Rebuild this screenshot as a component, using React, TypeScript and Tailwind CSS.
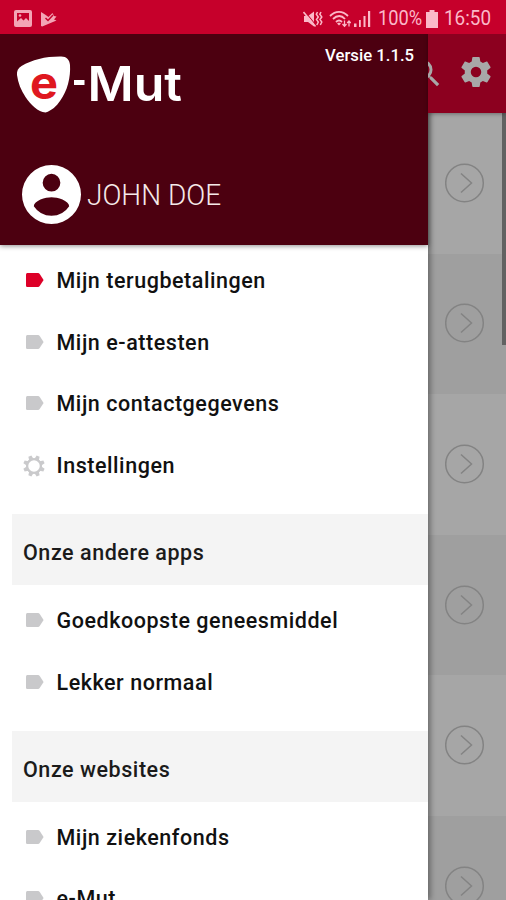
type MenuItem = {
  label: string;
  icon?: "tag" | "gear";
  active?: boolean;
};

type MenuSection = {
  title?: string;
  items: MenuItem[];
};

const sections: MenuSection[] = [
  {
    items: [
      { label: "Mijn terugbetalingen", active: true },
      { label: "Mijn e-attesten" },
      { label: "Mijn contactgegevens" },
      { label: "Instellingen", icon: "gear" },
    ],
  },
  {
    title: "Onze andere apps",
    items: [{ label: "Goedkoopste geneesmiddel" }, { label: "Lekker normaal" }],
  },
  {
    title: "Onze websites",
    items: [{ label: "Mijn ziekenfonds" }, { label: "e-Mut" }],
  },
];

const TagIcon = ({ active }: { active?: boolean }) => (
  <svg
    viewBox="0 0 18 14"
    className={`h-[14px] w-[18px] ${active ? "text-[#dd0028]" : "text-[#c9c9cb]"}`}
    fill="currentColor"
  >
    <path d="M1.6 0H12c.7 0 1.3.3 1.7.9L17.6 7l-3.9 6.1c-.4.6-1 .9-1.7.9H1.6C.7 14 0 13.3 0 12.4V1.6C0 .7.7 0 1.6 0Z" />
  </svg>
);

const OutlineGearIcon = () => (
  <svg viewBox="-11 -11 22 22" className="mt-[2px] -ml-[3px] h-[22px] w-[22px] shrink-0 text-[#cacacc]">
    <circle r="6.9" fill="none" stroke="currentColor" strokeWidth="2.3" />
    {[22.5, 67.5, 112.5, 157.5, 202.5, 247.5, 292.5, 337.5].map((angle) => (
      <path key={angle} d="M-2.3 -7 -1.6 -10.8H1.6L2.3 -7Z" fill="currentColor" transform={`rotate(${angle})`} />
    ))}
  </svg>
);

const StatusBar = () => (
  <header className="flex h-[34px] shrink-0 items-center justify-between bg-[#c6002b] pt-[3px] pr-[15px] pl-[14px] text-[#fbb9c8]">
    <div className="flex items-center gap-[9px]">
      <svg viewBox="0 0 18 17" className="h-[17px] w-[18px]">
        <rect width="18" height="17" rx="2" fill="#f3a5b5" />
        <path d="M3 3h12v8l-3-3-2.5 2.5L7 8l-4 3.5Z" fill="#c6002b" />
        <circle cx="6" cy="5.5" r="1.3" fill="#f3a5b5" />
      </svg>
      <svg viewBox="0 0 16 16" className="h-4 w-4">
        <path d="M0 1 4 3.500l3.500 2.500 4-4 1.500 3 2.500.5-2.500 3 2.500 1L1.200 15.500 0 15Z" fill="#f3a5b5" />
        <path d="m4.500 7 2.500 2.500 5-5.500" fill="none" stroke="#c6002b" strokeWidth="1.5" />
      </svg>
    </div>
    <div className="flex items-center">
      <svg viewBox="0 0 20 18" className="mr-[6px] h-[18px] w-5" fill="none" stroke="currentColor">
        <path d="M1 6h4l6-4.500v15L5 12H1Z" fill="currentColor" stroke="none" />
        <path d="m1.500 1 12 15" stroke="#c6002b" strokeWidth="1.2" />
        <path d="m.5 2 12 14.500" strokeWidth="1.6" />
        <path d="m14.500 2-1.200 2.300L15.300 7l-1.800 2.500 1.800 2.500-1.500 3M18 2l-1.200 2.300L18.800 7 17 9.500l1.800 2.500-1.500 3" strokeWidth="1.5" />
      </svg>
      <svg viewBox="0 0 22 18" className="mr-[3px] h-[18px] w-[22px]" fill="none" stroke="currentColor">
        <path d="M1 6c5.500-5.500 12.500-5.500 18 0M4 9c4-4 8.500-4 12 0M7 12c2-2 4-2 6 0" strokeWidth="1.8" />
        <path d="m8 13.500 2 2 2-2-2-1Z" fill="currentColor" stroke="none" />
        <path d="M15.500 10.500V16M13.500 14l2 2.200 2-2.200M20 16.500V11M18.200 13l1.800-2 1.800 2" strokeWidth="1.3" />
      </svg>
      <svg viewBox="0 0 17 17" className="mr-[7px] h-[17px] w-[17px]" fill="currentColor">
        <path d="M0 13.500h2.500V17H0ZM5 10h1.800v7H5ZM9.500 6h2v11h-2ZM14 1h2.200v16H14Z" />
      </svg>
      <span className="w-[43px] whitespace-nowrap text-[21px] leading-none">
        <span className="inline-block origin-left scale-x-[0.87]">100%</span>
      </span>
      <svg viewBox="0 0 12 18" className="mr-[6px] ml-[5px] h-[18px] w-3" fill="currentColor">
        <path d="M3.500 0h5v2H12v16H0V2h3.500Z" />
      </svg>
      <span className="w-[47px] text-[21px] leading-none">
        <span className="inline-block origin-left scale-x-[0.9]">16:50</span>
      </span>
    </div>
  </header>
);

const Logo = () => (
  <svg viewBox="0 0 180 60" className="h-[60px] w-[180px] overflow-visible">
    <path
      d="M44 1.5C50 1 53.500 4 54 10c.8 12-2.500 26-10 36-3.500 5-8 9.500-14.500 11.500C22 57 15 50 9.500 42 5 35 2 28 1 20c-.3-4 1-7 4.500-9C16 4.800 29 1.500 44 1.500Z"
      fill="white"
    />
    <text x="14" y="43.500" textLength="28" lengthAdjust="spacingAndGlyphs" className="fill-[#df1820] font-['Inter'] text-[45px] font-bold">e</text>
    <rect x="58" y="25" width="10.500" height="5" fill="white" />
    <text x="71.500" y="46" textLength="94.500" lengthAdjust="spacingAndGlyphs" className="fill-white font-['Inter'] text-[48px] font-semibold">Mut</text>
  </svg>
);

const DrawerHeader = () => (
  <div className="relative z-10 flex h-[211px] shrink-0 flex-col justify-between bg-[#4c0010] pb-[21px] shadow-[0_1px_5px_rgba(0,0,0,0.45)]">
    <div className="flex items-start justify-between pt-[11px] pr-[14px] pl-4">
      <div className="pt-[10px]">
        <Logo />
      </div>
      <span className="text-[16.7px] leading-[22px] font-medium whitespace-nowrap text-white">Versie 1.1.5</span>
    </div>
    <div className="flex items-center gap-[6px] pl-[22px]">
      <svg viewBox="2 2 20 20" className="h-[59px] w-[59px]" fill="white">
        <path
          fillRule="evenodd"
          d="M12 2a10 10 0 1 0 0 20 10 10 0 0 0 0-20Zm0 3a3 3 0 1 1 0 6 3 3 0 0 1 0-6Zm0 14.200a7.200 7.200 0 0 1-6-3.220c.03-1.990 4-3.080 6-3.080s5.970 1.090 6 3.080a7.200 7.200 0 0 1-6 3.220Z"
        />
      </svg>
      <span className="origin-left scale-x-[0.965] pt-[3px] text-[29px] font-light text-[#f5e9e9]">JOHN DOE</span>
    </div>
  </div>
);

const Drawer = () => (
  <aside className="relative z-10 flex w-[428px] shrink-0 flex-col bg-white shadow-[2px_0_6px_rgba(0,0,0,0.4)]">
    <DrawerHeader />
    <nav className="flex flex-col">
      {sections.map((section, index) => (
        <section key={index}>
          {section.title && (
            <h2 className="mt-[18px] ml-3 flex h-[71px] items-center bg-[#f4f4f4] pt-[7px] pl-[11px] text-[21.5px] font-medium tracking-[0.55px] text-[#1b1b1b]">
              {section.title}
            </h2>
          )}
          <ul className="pt-1">
            {section.items.map((item) => (
              <li key={item.label} className="flex h-[61.8px] items-center pl-[25.5px] text-[21.5px] font-medium tracking-[0.55px] text-[#111]">
                <span className="flex w-[31px] items-center">
                  {item.icon === "gear" ? <OutlineGearIcon /> : <TagIcon active={item.active} />}
                </span>
                <span className="pt-[2px]">{item.label}</span>
              </li>
            ))}
          </ul>
        </section>
      ))}
    </nav>
  </aside>
);

// the page behind the opened drawer
const DimmedPage = () => (
  <main className="relative flex min-w-0 flex-1 flex-col">
    <div className="relative z-10 flex h-[79px] shrink-0 items-center justify-end overflow-hidden bg-[#8c001f] pr-[12px] shadow-[0_1px_4px_rgba(0,0,0,0.35)]">
      <svg viewBox="3 3 18 18" className="mr-[18px] h-[27px] w-[27px] shrink-0" fill="#a8a8a8">
        <path d="M15.500 14h-.79l-.28-.27A6.470 6.470 0 0 0 16 9.500 6.500 6.500 0 1 0 9.500 16c1.610 0 3.090-.59 4.230-1.570l.27.28v.79l5 4.990L20.490 19l-4.990-5Zm-6 0a4.500 4.500 0 1 1 0-9 4.500 4.500 0 0 1 0 9Z" />
      </svg>
      <svg viewBox="0 0 24 24" className="-mt-1 h-[36px] w-[36px] shrink-0" fill="#a8a8a8">
        <path d="M19.430 12.980c.04-.32.07-.64.07-.98s-.03-.66-.07-.98l2.110-1.650c.19-.15.24-.42.12-.64l-2-3.460c-.12-.22-.39-.3-.61-.22l-2.490 1c-.52-.4-1.080-.73-1.690-.98l-.38-2.650A.488.488 0 0 0 14 2h-4c-.25 0-.46.18-.49.42l-.38 2.650c-.61.25-1.170.59-1.690.98l-2.490-1c-.23-.09-.49 0-.61.22l-2 3.460c-.13.22-.07.49.12.64l2.110 1.650c-.04.32-.07.65-.07.98s.03.66.07.98l-2.110 1.650c-.19.15-.24.42-.12.64l2 3.460c.12.22.39.3.61.22l2.490-1c.52.4 1.080.73 1.690.98l.38 2.650c.03.24.24.42.49.42h4c.25 0 .46-.18.49-.42l.38-2.650c.61-.25 1.170-.59 1.690-.98l2.490 1c.23.09.49 0 .61-.22l2-3.460c.12-.22.07-.49-.12-.64l-2.110-1.650ZM12 15.500a3.500 3.500 0 1 1 0-7 3.500 3.500 0 0 1 0 7Z" />
      </svg>
    </div>
    <ul>
      {[0, 1, 2, 3, 4, 5].map((row) => (
        <li
          key={row}
          className={`flex h-[140.6px] items-center justify-end pr-[21px] ${row % 2 === 0 ? "bg-[#a6a6a6]" : "bg-[#9f9f9f]"}`}
        >
          <svg viewBox="0 0 40 40" className="-mt-px h-10 w-10 shrink-0" fill="none" stroke="#838383" strokeWidth="1.5">
            <circle cx="19.500" cy="20" r="18.800" />
            <path d="m16 10.500 10.500 9.500L16 29.500" />
          </svg>
        </li>
      ))}
    </ul>
    <div className="absolute top-[79px] right-0 h-[232px] w-[4px] bg-[#626262]" />
  </main>
);

export default function App() {
  return (
    <div className="flex h-[900px] w-[506px] flex-col overflow-hidden bg-white font-['Roboto',sans-serif]">
      <StatusBar />
      <div className="flex min-h-0 flex-1 overflow-hidden">
        <Drawer />
        <DimmedPage />
      </div>
    </div>
  );
}
